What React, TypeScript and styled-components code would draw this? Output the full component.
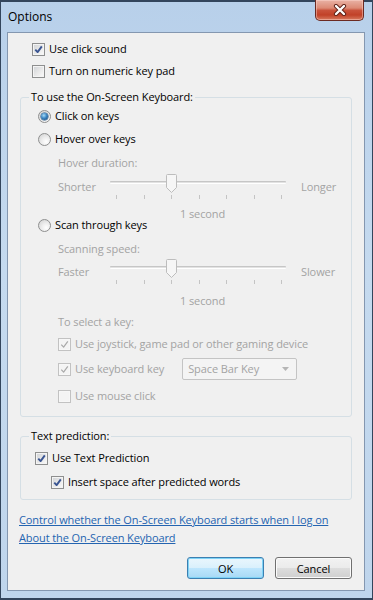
import React from "react";
import styled, { createGlobalStyle } from "styled-components";

const GlobalStyle = createGlobalStyle`
  html, body { margin: 0; padding: 0; background: #fff; }
  body { font-family: "Open Sans", "Noto Sans", sans-serif; font-size: 11px; letter-spacing: -0.1px; color: #000; }
  * { box-sizing: border-box; }
`;

const DISABLED = "#a3a3a3";

const Window = styled.div`
  width: 373px;
  height: 600px;
  display: flex;
  flex-direction: column;
  background: linear-gradient(180deg, #b8d0ea 0%, #c5daef 45%, #bfd5ec 100%);
  border: 1px solid #33455c;
  border-top-width: 2px;
  border-bottom-width: 2px;
`;

const TitleBar = styled.div`
  height: 30px;
  flex: none;
  display: flex;
  justify-content: space-between;
  align-items: flex-start;
`;

const Title = styled.span`
  margin: 7px 0 0 7px;
  font-size: 12px;
  line-height: 16px;
  letter-spacing: 0;
  color: #000;
`;

const CloseButton = styled.div`
  margin: -2px 8px 0 0;
  width: 49px;
  height: 21px;
  border: 1px solid #6b2a22;
  border-top: none;
  border-radius: 0 0 5px 5px;
  background: linear-gradient(180deg, #e9b2a5 0%, #dc8a75 40%, #c9523b 52%, #c14128 75%, #d77a5f 100%);
  box-shadow: inset 0 0 0 1px rgba(255, 220, 210, 0.45);
  display: flex;
  align-items: center;
  justify-content: center;
`;

const Client = styled.div`
  flex: 1;
  margin: 0 7px 7px 6px;
  border: 1px solid #8497b0;
  background: #f0f0f0;
  display: flex;
  flex-direction: column;
  padding-top: 8px;
`;

const Row = styled.div<{ $mt?: number; $indent?: number; $h?: number }>`
  display: flex;
  align-items: center;
  gap: 4px;
  height: ${(p) => p.$h ?? 16}px;
  margin-top: ${(p) => p.$mt ?? 0}px;
  padding-left: ${(p) => p.$indent ?? 0}px;
  line-height: 16px;
  white-space: nowrap;
`;

const Label = styled.span<{ $disabled?: boolean }>`
  color: ${(p) => (p.$disabled ? DISABLED : "#000")};
`;

const Box = styled.span<{ $disabled?: boolean }>`
  width: 13px;
  height: 13px;
  flex: none;
  display: inline-flex;
  align-items: center;
  justify-content: center;
  border: 1px solid ${(p) => (p.$disabled ? "#c2c2c2" : "#8e8f8f")};
  background: ${(p) =>
    p.$disabled
      ? "#f4f4f4"
      : "linear-gradient(135deg, #cfd2d6 0%, #e9e9e9 55%, #fbfbfb 100%)"};
  box-shadow: inset 0 0 0 1px ${(p) => (p.$disabled ? "#f7f7f7" : "#f4f4f4")};
`;

const RadioCircle = styled.span`
  width: 13px;
  height: 13px;
  flex: none;
  border-radius: 50%;
  border: 1px solid #8e8f8f;
  background: radial-gradient(circle at 65% 70%, #ffffff 0%, #eeeeee 40%, #cfcfcf 100%);
  display: inline-flex;
  align-items: center;
  justify-content: center;
`;

const RadioDot = styled.span`
  width: 7px;
  height: 7px;
  border-radius: 50%;
  background: radial-gradient(circle at 40% 35%, #a9dcf7 0%, #3b86c4 45%, #113f6e 100%);
  box-shadow: 0 0 0 0.5px #1b4c7a;
`;

const Group = styled.fieldset<{ $mt: number; $pb: number }>`
  margin: ${(p) => p.$mt}px 12px 0 12px;
  padding: 0 0 ${(p) => p.$pb}px 0;
  min-width: 0;
  border: 1px solid #d5dfe5;
  border-radius: 3px;
  display: flex;
  flex-direction: column;
`;

const Legend = styled.legend`
  margin-left: 8px;
  padding: 0 2px;
  line-height: 16px;
  color: #000;
`;

const SliderRow = styled.div<{ $mt: number }>`
  display: flex;
  align-items: flex-start;
  height: 27px;
  margin-top: ${(p) => p.$mt}px;
  padding-left: 37px;
  white-space: nowrap;
`;

const SliderEnd = styled.span<{ $w?: number; $ml?: number }>`
  width: ${(p) => (p.$w ? `${p.$w}px` : "auto")};
  margin: 5px 0 0 ${(p) => p.$ml ?? 0}px;
  line-height: 16px;
  color: ${DISABLED};
  flex: none;
`;

const TrackArea = styled.div`
  position: relative;
  width: 176px;
  flex: none;
  display: flex;
  flex-direction: column;
`;

const TrackLine = styled.div`
  margin-top: 7px;
  height: 3px;
  border-top: 1px solid #c6c6c6;
  border-bottom: 1px solid #ffffff;
  background: #e2e2e2;
  border-radius: 1px;
`;

const Ticks = styled.div`
  margin-top: 11px;
  height: 4px;
  display: flex;
  justify-content: space-between;
  padding: 0 4px 0 6px;
`;

const Tick = styled.span`
  width: 1px;
  height: 4px;
  background: #c4c4c4;
`;

const Thumb = styled.svg`
  position: absolute;
  left: 56px;
  top: 0;
`;

const Caption = styled.div<{ $mt: number }>`
  margin-top: ${(p) => p.$mt}px;
  padding-left: 159px;
  height: 16px;
  line-height: 16px;
  color: ${DISABLED};
`;

const Select = styled.div`
  margin-left: 14px;
  width: 115px;
  height: 22px;
  flex: none;
  border: 1px solid #c4c4c4;
  border-radius: 2px;
  background: #f4f4f4;
  display: flex;
  align-items: center;
  justify-content: space-between;
  padding: 0 7px 0 5px;
  color: ${DISABLED};
`;

const LinkRow = styled.a<{ $mt: number }>`
  display: block;
  align-self: flex-start;
  margin: ${(p) => p.$mt}px 0 0 11px;
  line-height: 16px;
  color: #2464b0;
  text-decoration: underline;
  white-space: nowrap;
`;

const ButtonBar = styled.div`
  margin: 11px 12px 0 0;
  display: flex;
  justify-content: flex-end;
  gap: 11px;
`;

const Button = styled.button<{ $default?: boolean }>`
  width: 77px;
  height: 22px;
  padding: 0;
  font: inherit;
  letter-spacing: inherit;
  color: #000;
  border-radius: 3px;
  border: 1px solid ${(p) => (p.$default ? "#3c7fb1" : "#707070")};
  background: ${(p) =>
    p.$default
      ? "linear-gradient(180deg, #eaf6fd 0%, #d9f0fc 50%, #bee6fd 51%, #a7d9f5 100%)"
      : "linear-gradient(180deg, #f2f2f2 0%, #ebebeb 50%, #dddddd 51%, #cfcfcf 100%)"};
  box-shadow: inset 0 0 0 1px ${(p) => (p.$default ? "#7fd3f6" : "#fbfbfb")};
`;

const Check = ({ disabled }: { disabled?: boolean }) => (
  <svg width="9" height="9" viewBox="0 0 9 9">
    <path
      d="M1.3 4.6 L3.6 7.1 L7.8 1.4"
      fill="none"
      stroke={disabled ? "#a9a9a9" : "#3a5592"}
      strokeWidth={disabled ? 1.2 : 1.9}
      strokeLinejoin="round"
    />
  </svg>
);

type CheckboxProps = { checked?: boolean; disabled?: boolean };
const Checkbox = ({ checked, disabled }: CheckboxProps) => (
  <Box $disabled={disabled}>{checked && <Check disabled={disabled} />}</Box>
);

const Radio = ({ checked }: { checked?: boolean }) => (
  <RadioCircle>{checked && <RadioDot />}</RadioCircle>
);

const Slider = ({ left, right, mt }: { left: string; right: string; mt: number }) => (
  <SliderRow $mt={mt}>
    <SliderEnd $w={52}>{left}</SliderEnd>
    <TrackArea>
      <TrackLine />
      <Ticks>
        {Array.from({ length: 7 }).map((_, i) => (
          <Tick key={i} />
        ))}
      </Ticks>
      <Thumb width="11" height="20" viewBox="0 0 11 20">
        <path
          d="M1.5 0.5 H9.5 Q10.5 0.5 10.5 1.5 V13.5 L5.5 18.5 L0.5 13.5 V1.5 Q0.5 0.5 1.5 0.5 Z"
          fill="#f6f6f6"
          stroke="#bdbdbd"
        />
      </Thumb>
    </TrackArea>
    <SliderEnd $ml={15}>{right}</SliderEnd>
  </SliderRow>
);

export default function App() {
  return (
    <>
      <GlobalStyle />
      <Window>
        <TitleBar>
          <Title>Options</Title>
          <CloseButton>
            <svg width="14" height="12" viewBox="0 0 14 12">
              <path d="M3 2 L11 10 M11 2 L3 10" stroke="#5c1f16" strokeWidth="4.2" strokeLinecap="round" />
              <path d="M3 2 L11 10 M11 2 L3 10" stroke="#ffffff" strokeWidth="2.4" strokeLinecap="round" />
            </svg>
          </CloseButton>
        </TitleBar>
        <Client>
          <Row $indent={24}>
            <Checkbox checked />
            <Label>Use click sound</Label>
          </Row>
          <Row $indent={24} $mt={6}>
            <Checkbox />
            <Label>Turn on numeric key pad</Label>
          </Row>

          <Group $mt={10} $pb={12}>
            <Legend>To use the On-Screen Keyboard:</Legend>
            <Row $indent={17} $mt={3}>
              <Radio checked />
              <Label>Click on keys</Label>
            </Row>
            <Row $indent={17} $mt={7}>
              <Radio />
              <Label>Hover over keys</Label>
            </Row>
            <Row $indent={37} $mt={8}>
              <Label $disabled>Hover duration:</Label>
            </Row>
            <Slider left="Shorter" right="Longer" mt={3} />
            <Caption $mt={5}>1 second</Caption>
            <Row $indent={17} $mt={-5}>
              <Radio />
              <Label>Scan through keys</Label>
            </Row>
            <Row $indent={37} $mt={8}>
              <Label $disabled>Scanning speed:</Label>
            </Row>
            <Slider left="Faster" right="Slower" mt={2} />
            <Caption $mt={7}>1 second</Caption>
            <Row $indent={37} $mt={5}>
              <Label $disabled>To select a key:</Label>
            </Row>
            <Row $indent={37} $mt={6}>
              <Checkbox checked disabled />
              <Label $disabled>Use joystick, game pad or other gaming device</Label>
            </Row>
            <Row $indent={37} $mt={9}>
              <Checkbox checked disabled />
              <Label $disabled>Use keyboard key</Label>
              <Select>
                <span>Space Bar Key</span>
                <svg width="7" height="4" viewBox="0 0 7 4">
                  <path d="M0 0 H7 L3.5 4 Z" fill="#b5b5b5" />
                </svg>
              </Select>
            </Row>
            <Row $indent={37} $mt={11}>
              <Checkbox disabled />
              <Label $disabled>Use mouse click</Label>
            </Row>
          </Group>

          <Group $mt={11} $pb={9}>
            <Legend>Text prediction:</Legend>
            <Row $indent={14} $mt={6}>
              <Checkbox checked />
              <Label>Use Text Prediction</Label>
            </Row>
            <Row $indent={30} $mt={8}>
              <Checkbox checked />
              <Label>Insert space after predicted words</Label>
            </Row>
          </Group>

          <LinkRow href="#" $mt={12}>
            Control whether the On-Screen Keyboard starts when I log on
          </LinkRow>
          <LinkRow href="#" $mt={2}>
            About the On-Screen Keyboard
          </LinkRow>

          <ButtonBar>
            <Button $default>OK</Button>
            <Button>Cancel</Button>
          </ButtonBar>
        </Client>
      </Window>
    </>
  );
}
